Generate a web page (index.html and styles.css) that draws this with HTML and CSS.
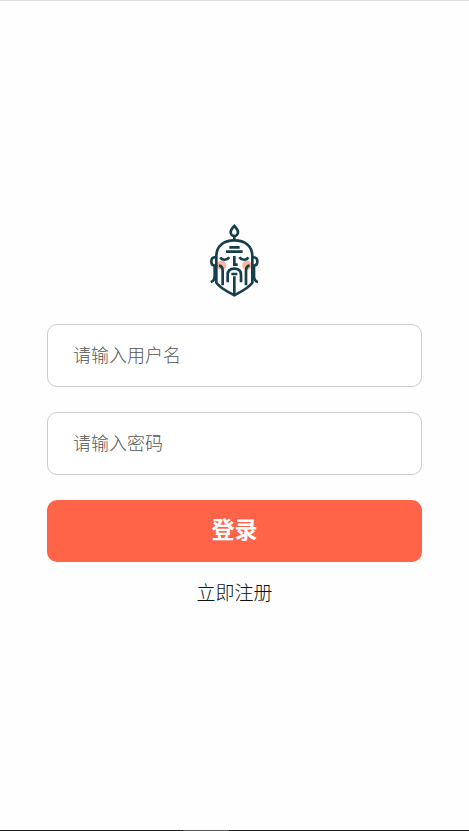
FILE: index.html
```html
<!DOCTYPE html>
<html lang="zh-CN">
<head>
<meta charset="utf-8">
<meta name="viewport" content="width=device-width, initial-scale=1">
<title>登录</title>
<link rel="stylesheet" href="styles.css">
</head>
<body>
<main class="page">
  <form class="login">
    <svg class="logo" viewBox="2 0 204 264" aria-hidden="true">
      <g class="cheeks">
        <circle cx="64" cy="148" r="14"/>
        <circle cx="140" cy="148" r="14"/>
      </g>
      <g class="lines">
        <path d="M102 30C96 36 91 41 91 48C91 55 96 60 102 60C108 60 113 55 113 48C113 41 108 36 102 30Z"/>
        <path d="M102 60V72"/>
        <path d="M48 150V120C48 90 70 73 102 73C134 73 156 90 156 120V150"/>
        <path d="M48 148V200C58 216 80 226 102 238C124 226 146 216 156 200V148"/>
        <path d="M47 124C37 123 33 128 33 136C33 144 37 149 43 149V180C43 190 39 196 31 198"/>
        <path d="M157 124C167 123 171 128 171 136C171 144 167 149 161 149V180C161 190 165 196 173 198"/>
        <path d="M87 94H118M77 107H127"/>
        <path d="M60 124C65 133 80 134 87 124M117 124C124 134 139 133 144 124"/>
        <path d="M102 120V146H112"/>
        <path d="M56 149C64 150 67 155 67 164V208M148 149C140 150 137 155 137 164V208"/>
        <path d="M82 199V177C82 165 88 158 102 158C116 158 122 165 122 177V199"/>
        <path d="M93 174H111M102 181V236"/>
      </g>
    </svg>
    <input class="field" type="text" placeholder="请输入用户名" aria-label="用户名">
    <input class="field" type="password" placeholder="请输入密码" aria-label="密码">
    <button class="submit" type="submit">登录</button>
    <a class="register" href="#">立即注册</a>
  </form>
</main>
</body>
</html>
```
FILE: styles.css
```css
* {
  box-sizing: border-box;
}

body {
  margin: 0;
  background: #fefefe;
  color: #333;
  font-family: "Noto Sans CJK SC", sans-serif;
}

.page {
  min-height: 100vh;
  display: flex;
  align-items: center;
  justify-content: center;
  border-top: 1px solid #ddd;
  border-bottom: 1px solid;
  border-image: linear-gradient(#ddd 50%, #1b1b20 50%) 1;
  position: relative;
}

/* Handle on the bottom edge */
.page::after {
  content: "";
  position: absolute;
  bottom: -1px;
  left: 39%;
  width: 46px;
  height: 1px;
  background: #555;
}

.login {
  width: 80%;
  display: flex;
  flex-direction: column;
  align-items: center;
  padding-bottom: 11px;
}

.logo {
  width: 68px;
  height: 88px;
  margin-bottom: 20px;
}

.cheeks {
  fill: #f9b5a0;
}

.lines {
  fill: none;
  stroke: #163f4b;
  stroke-width: 8;
}

.field {
  width: 100%;
  height: 63px;
  margin: 0 0 25px;
  padding: 0 25px 4px;
  border: 1px solid #ccc;
  border-radius: 10px;
  background: #fff;
  color: #333;
  font: 300 18px "Noto Sans CJK SC", sans-serif;
}

.field::placeholder {
  color: #555;
}

.submit {
  width: 100%;
  height: 62px;
  margin: 0 0 18px;
  padding: 0 0 6px;
  border: 0;
  border-radius: 10px;
  background: #ff6348;
  color: #fff;
  font: bold 23px "Noto Sans CJK SC", sans-serif;
}

.register {
  color: #111;
  font-size: 19px;
  font-weight: 300;
  line-height: 24px;
  text-decoration: none;
}
```
